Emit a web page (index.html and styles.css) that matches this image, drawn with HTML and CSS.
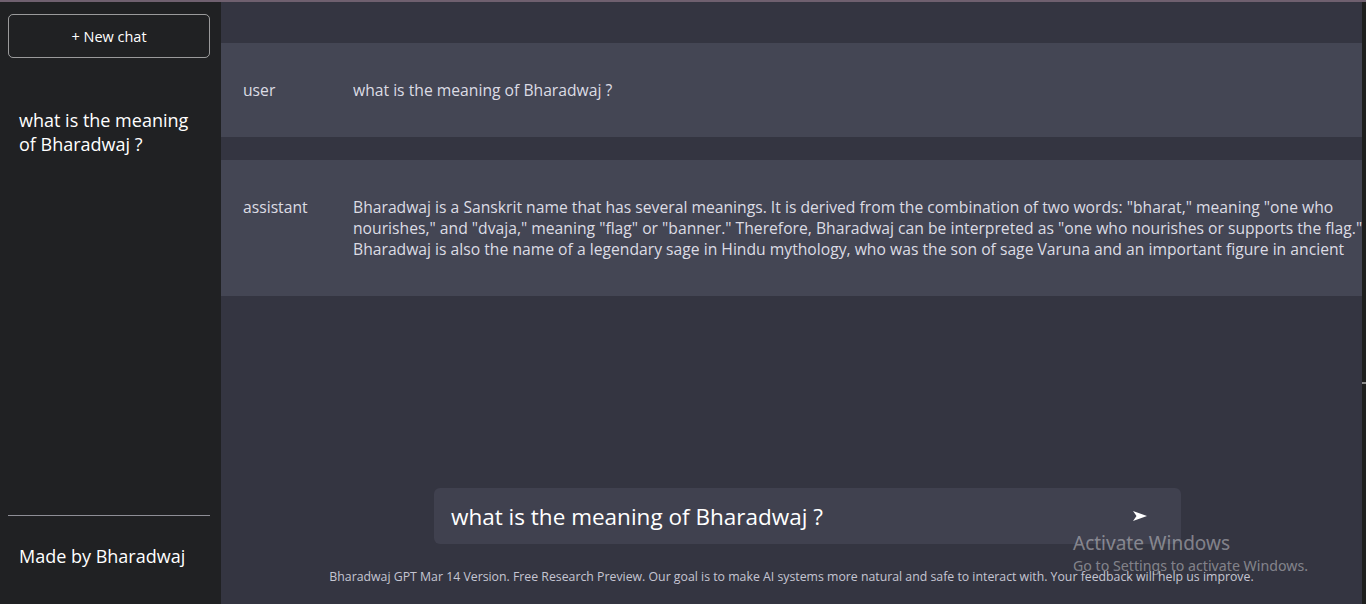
FILE: index.html
```html
<!DOCTYPE html>
<html lang="en">
<head>
<meta charset="utf-8">
<title>Bharadwaj GPT</title>
<link rel="stylesheet" href="styles.css">
</head>
<body>
<div class="topbar"></div>
<div class="app">
  <aside class="sidebar">
    <button class="new-chat">+ New chat</button>
    <div class="history">
      <p class="history-item">what is the meaning of Bharadwaj ?</p>
    </div>
    <div class="sidebar-footer">Made by Bharadwaj</div>
  </aside>
  <main class="main">
    <section class="messages">
      <div class="msg">
        <div class="role">user</div>
        <div class="content">what is the meaning of Bharadwaj ?</div>
      </div>
      <div class="msg">
        <div class="role">assistant</div>
        <div class="content">
          <span class="line">Bharadwaj is a Sanskrit name that has several meanings. It is derived from the combination of two words: "bharat," meaning "one who</span>
          <span class="line">nourishes," and "dvaja," meaning "flag" or "banner." Therefore, Bharadwaj can be interpreted as "one who nourishes or supports the flag."</span>
          <span class="line">Bharadwaj is also the name of a legendary sage in Hindu mythology, who was the son of sage Varuna and an important figure in ancient</span>
        </div>
      </div>
    </section>
    <div class="composer">
      <div class="input-box">
        <span class="input-text">what is the meaning of Bharadwaj ?</span>
        <svg class="send" width="16" height="12" viewBox="0 0 16 12"><path d="M1 1 L15 6 L1 11 L4.5 6 Z" fill="#ffffff"/></svg>
      </div>
      <p class="disclaimer">Bharadwaj GPT Mar 14 Version. Free Research Preview. Our goal is to make AI systems more natural and safe to interact with. Your feedback will help us improve.</p>
    </div>
  </main>
  <div class="edge"><span class="edge-mark"></span></div>
</div>
<div class="watermark">
  <div class="wm-title">Activate Windows</div>
  <div class="wm-sub">Go to Settings to activate Windows.</div>
</div>
</body>
</html>
```

FILE: styles.css
```css
* { box-sizing: border-box; }
html, body { margin: 0; padding: 0; }
body {
  width: 1366px;
  height: 604px;
  overflow: hidden;
  background: #343541;
  font-family: "Open Sans", "Noto Sans", sans-serif;
  color: #ececf1;
}
.topbar { height: 2px; background: #6f606f; }
.app { display: flex; height: 602px; }

.sidebar {
  flex: none;
  width: 221px;
  background: #202123;
  display: flex;
  flex-direction: column;
  padding: 12px 11px 0 8px;
}
.new-chat {
  height: 44px;
  width: 100%;
  background: transparent;
  border: 1px solid rgba(255,255,255,0.55);
  border-radius: 5px;
  color: #ffffff;
  font-family: "Open Sans", sans-serif;
  font-size: 14.5px;
  font-weight: 500;
}
.history { flex: 1; padding: 50px 0 0 11px; }
.history-item {
  margin: 0;
  width: 180px;
  font-size: 18px;
  line-height: 24px;
  color: #ffffff;
  font-weight: 500;
}
.sidebar-footer {
  border-top: 1px solid #8e8e96;
  padding: 28px 11px 36px;
  font-size: 18px;
  line-height: 24px;
  color: #ffffff;
  font-weight: 500;
}

.main {
  flex: 1;
  min-width: 0;
  display: flex;
  flex-direction: column;
  background: #343541;
}
.messages { flex: 1; padding-top: 41px; }
.msg {
  display: flex;
  background: #444654;
  padding: 37px 0 36px 22px;
  font-size: 15.7px;
  font-weight: 400;
  line-height: 21px;
  color: #dcdce4;
}
.msg + .msg { margin-top: 23px; }
.role { width: 110px; flex: none; }
.content { flex: 1; min-width: 0; white-space: nowrap; overflow: hidden; }
.line { display: block; }

.composer { display: flex; flex-direction: column; }
.input-box {
  margin-left: 213px;
  width: 747px;
  height: 56px;
  background: #40414f;
  border-radius: 6px;
  display: flex;
  align-items: center;
  justify-content: space-between;
  padding: 0 33px 0 17px;
}
.input-text { font-size: 22.5px; font-weight: 500; color: #ffffff; }
.send { display: block; }
.disclaimer {
  margin: 26px 0 0;
  padding-bottom: 20px;
  text-align: center;
  font-size: 12.3px;
  font-weight: 500;
  line-height: 14px;
  color: #c5c5d2;
  white-space: nowrap;
}

.edge { flex: none; width: 4px; background: #1e1f1e; position: relative; }
.edge-mark {
  position: absolute;
  left: 0;
  top: 380px;
  width: 4px;
  height: 2px;
  background: #8a8a8a;
}

.watermark {
  position: absolute;
  left: 1073px;
  top: 530px;
  color: rgba(255,255,255,0.4);
  font-family: "Noto Sans", "Open Sans", sans-serif;
  pointer-events: none;
}
.wm-title { font-size: 19px; line-height: 26px; }
.wm-sub { font-size: 14.2px; line-height: 20px; }
```
